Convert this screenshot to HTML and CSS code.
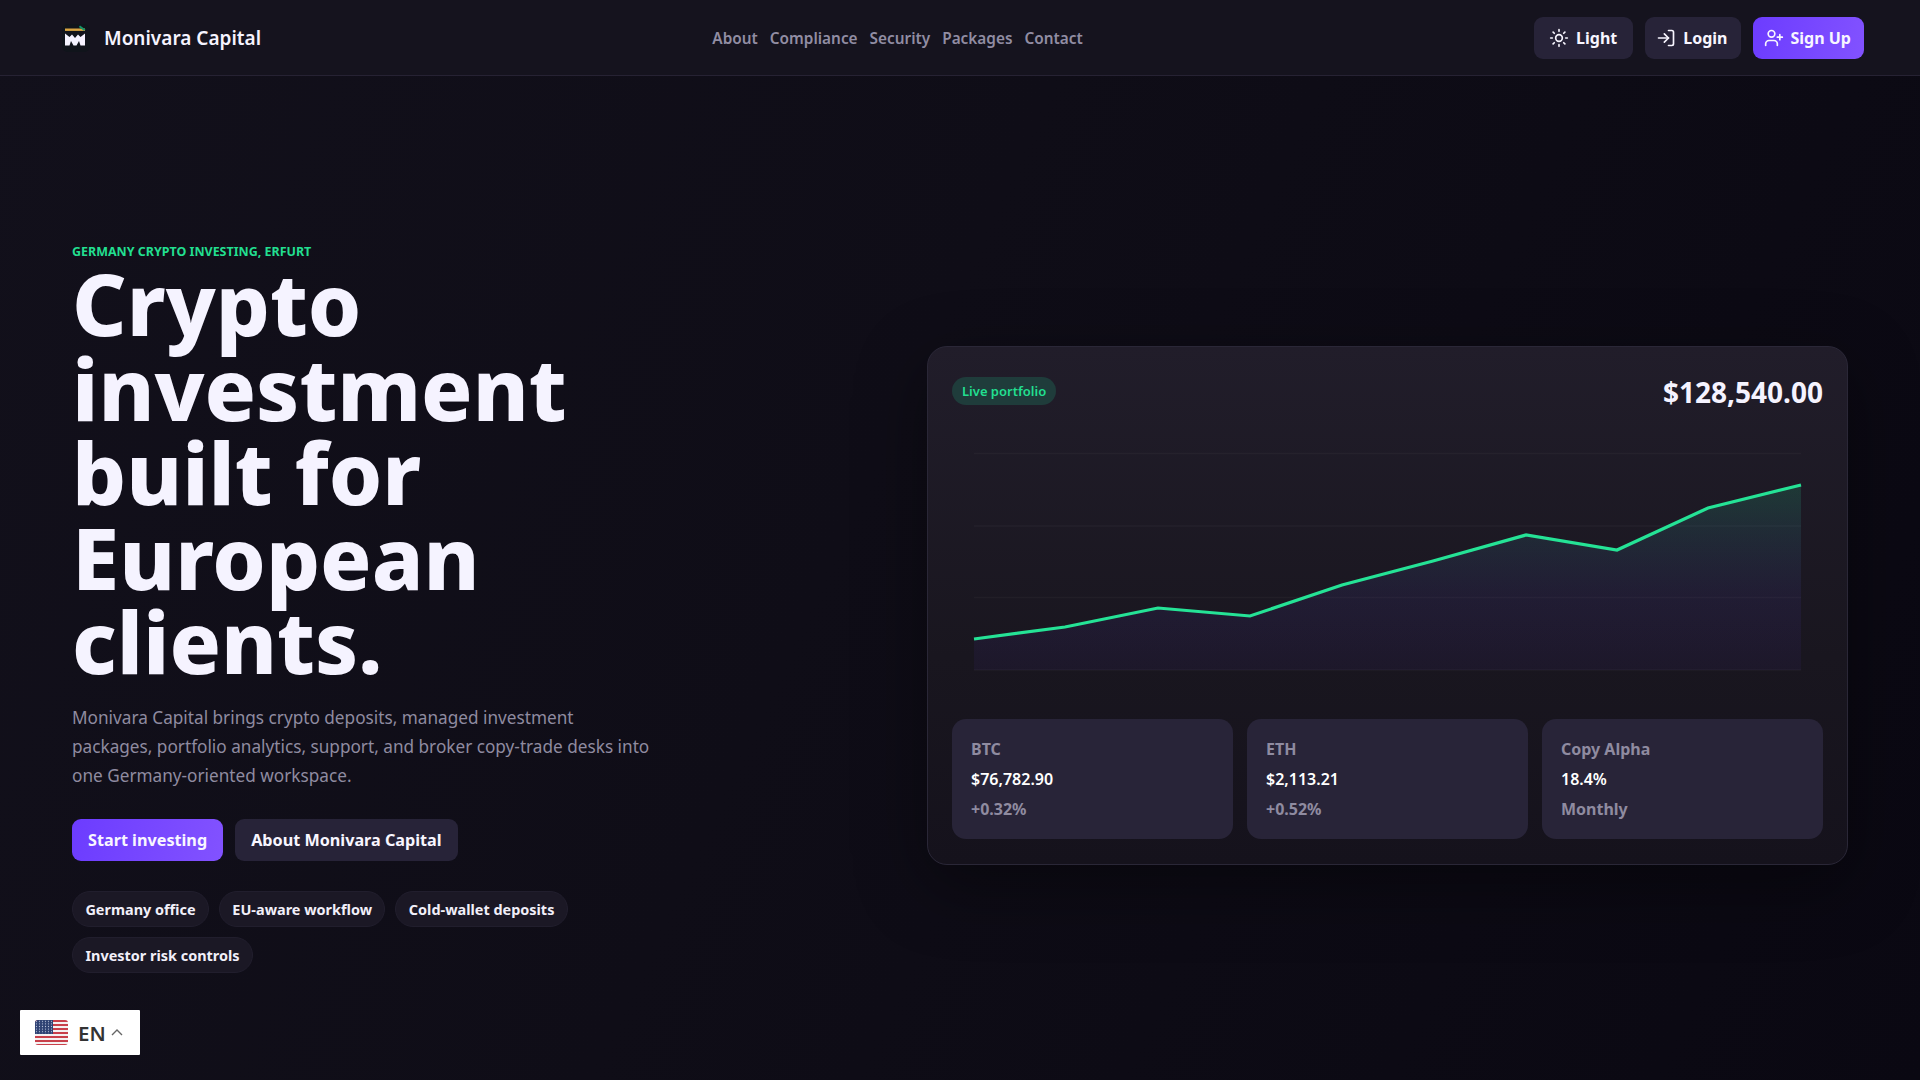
FILE: index.html
```html
<!DOCTYPE html>
<html lang="en">
<head>
<meta charset="utf-8">
<title>Monivara Capital</title>
<link rel="stylesheet" href="styles.css">
</head>
<body>
<header class="topbar">
  <a class="brand" href="#">
    <span class="brand-tile">
      <svg class="brand-mark" viewBox="0 0 28 28" aria-hidden="true">
        <rect x="3" y="4.5" width="20" height="2.4" fill="#d9a441"/>
        <path d="M18 1.5l5.5 4-1.6 1.2-5-3.8z" fill="#12966a"/>
        <path d="M3 9.5l4.5 3.5 2.5-2.5 3 3.5 3-3.5 2.500 2.500 4.500-3.500v12h-4.500l-1.500-4.500-2.500 4.500h-3l-2.500-4.500-1.500 4.500H3z" fill="#f5f3ff"/>
      </svg>
    </span>
    <span class="brand-name">Monivara Capital</span>
  </a>
  <nav class="nav">
    <a href="#">About</a><a href="#">Compliance</a><a href="#">Security</a><a href="#">Packages</a><a href="#">Contact</a>
  </nav>
  <div class="actions">
    <a class="btn btn-dark btn-theme" href="#">
      <svg class="icon" viewBox="0 0 24 24"><circle cx="12" cy="12" r="4"/><path d="M12 2v2M12 20v2M4.93 4.93l1.41 1.41M17.66 17.66l1.41 1.41M2 12h2M20 12h2M6.34 17.66l-1.41 1.41M19.07 4.93l-1.41 1.41"/></svg>
      Light
    </a>
    <a class="btn btn-dark" href="#">
      <svg class="icon" viewBox="0 0 24 24"><path d="M15 3h4a2 2 0 0 1 2 2v14a2 2 0 0 1-2 2h-4"/><path d="M10 17l5-5-5-5"/><path d="M15 12H3"/></svg>
      Login
    </a>
    <a class="btn btn-primary" href="#">
      <svg class="icon" viewBox="0 0 24 24"><path d="M16 21v-2a4 4 0 0 0-4-4H6a4 4 0 0 0-4 4v2"/><circle cx="9" cy="7" r="4"/><path d="M19 8v6M22 11h-6"/></svg>
      Sign Up
    </a>
  </div>
</header>

<main class="hero">
  <section class="hero-copy">
    <p class="eyebrow">Germany crypto investing, Erfurt</p>
    <h1>Crypto investment built for European clients.</h1>
    <p class="lead">Monivara Capital brings crypto deposits, managed investment packages, portfolio analytics, support, and broker copy-trade desks into one Germany-oriented workspace.</p>
    <div class="cta-row">
      <a class="btn btn-primary btn-cta" href="#">Start investing</a>
      <a class="btn btn-dark btn-cta" href="#">About Monivara Capital</a>
    </div>
    <ul class="chips">
      <li>Germany office</li>
      <li>EU-aware workflow</li>
      <li>Cold-wallet deposits</li>
      <li>Investor risk controls</li>
    </ul>
  </section>

  <section class="card">
    <div class="card-head">
      <span class="badge">Live portfolio</span>
      <strong class="total">$128,540.00</strong>
    </div>
    <svg class="chart" viewBox="0 0 871 266" aria-hidden="true">
      <defs>
        <linearGradient id="areaFill" x1="0" y1="0" x2="0" y2="1">
          <stop offset="0" stop-color="#22df90" stop-opacity=".16"/>
          <stop offset=".6" stop-color="#5a4bd6" stop-opacity=".1"/>
          <stop offset="1" stop-color="#6d3bff" stop-opacity=".05"/>
        </linearGradient>
      </defs>
      <path class="grid-line" d="M22 20.5H849M22 93H849M22 164.5H849M22 237H849"/>
      <path fill="url(#areaFill)" d="M22 206L113 194L206 175L298 183L390 152L481 128L574 102L665 117L756 75L849 52V237H22Z"/>
      <path class="trend" d="M22 206L113 194L206 175L298 183L390 152L481 128L574 102L665 117L756 75L849 52"/>
    </svg>
    <div class="stats">
      <div class="stat"><span class="stat-label">BTC</span><span class="stat-value">$76,782.90</span><span class="stat-note">+0.32%</span></div>
      <div class="stat"><span class="stat-label">ETH</span><span class="stat-value">$2,113.21</span><span class="stat-note">+0.52%</span></div>
      <div class="stat"><span class="stat-label">Copy Alpha</span><span class="stat-value">18.4%</span><span class="stat-note">Monthly</span></div>
    </div>
  </section>
</main>

<button class="lang" type="button">
  <svg class="flag" viewBox="0 0 33 25" aria-hidden="true">
    <defs>
      <clipPath id="flagClip"><rect width="33" height="25" rx="3"/></clipPath>
      <pattern id="stars" width="3" height="2.6" patternUnits="userSpaceOnUse"><rect width="3" height="2.6" fill="#2f4273"/><circle cx="1.5" cy="1.3" r=".6" fill="#b9c2da"/></pattern>
    </defs>
    <g clip-path="url(#flagClip)">
      <rect width="33" height="25" fill="#f4f1f1"/>
      <path fill="#c8404a" d="M0 0h33v2H0zM0 4h33v2H0zM0 8h33v2H0zM0 12h33v2H0zM0 16h33v2H0zM0 20h33v2H0zM0 24h33v1H0z"/>
      <rect width="18" height="14" fill="url(#stars)"/>
    </g>
  </svg>
  <span class="lang-code">EN</span>
  <svg class="chevron" viewBox="0 0 12 7" aria-hidden="true"><path d="M1 6l5-5 5 5"/></svg>
</button>
</body>
</html>
```
FILE: styles.css
```css
* { box-sizing: border-box; }
html, body { margin: 0; padding: 0; height: 100%; }
body {
  font-family: "Noto Sans", "Open Sans", sans-serif;
  color: #f5f3ff;
  background: linear-gradient(115deg, #12101b 0%, #0f0d17 45%, #0a0812 100%);
  min-height: 1080px;
  overflow: hidden;
}
a { color: inherit; text-decoration: none; }

.topbar {
  height: 76px;
  display: flex;
  justify-content: space-between;
  align-items: center;
  padding: 0 56px 0 62px;
  background: #15131e;
  border-bottom: 1px solid #262233;
}
.brand { display: flex; align-items: center; gap: 14px; }
.brand-tile {
  width: 28px; height: 28px;
  background: #10141b;
  border-radius: 6px;
  display: flex;
}
.brand-mark { width: 28px; height: 28px; }
.brand-name { font-size: 19px; font-weight: 600; color: #f5f3ff; }

.nav { display: flex; gap: 12px; padding-top: 1px; font-size: 15.36px; font-weight: 600; color: #918da3; }

.actions { display: flex; gap: 12px; }
.btn {
  height: 42px;
  display: inline-flex;
  align-items: center;
  gap: 7px;
  padding: 0 13px 0 11px;
  border-radius: 9px;
  font-size: 16px;
  font-weight: 700;
  color: #f8f6ff;
}
.btn-dark { background: #272338; }
.btn-theme { padding: 0 16px 0 15px; }
.btn-primary { background: linear-gradient(100deg, #6c3cff, #8252ff); }
.btn-cta { padding: 0 16px; font-size: 16.2px; }
.icon {
  width: 20px; height: 20px;
  fill: none;
  stroke: currentColor;
  stroke-width: 2;
  stroke-linecap: round;
  stroke-linejoin: round;
  flex: none;
}

.hero {
  height: 1004px;
  padding: 55px 72px 0;
  display: flex;
  justify-content: space-between;
  align-items: center;
}
.hero-copy { width: 620px; }
.eyebrow {
  margin: 0;
  padding-top: 4px;
  font-size: 12.48px;
  font-weight: 700;
  line-height: 19px;
  text-transform: uppercase;
  color: #22df90;
}
h1 {
  margin: 0 0 19.5px;
  font-size: 85px;
  line-height: 84.5px;
  font-weight: 800;
  color: #f5f3ff;
}
.lead {
  margin: 0 0 29px;
  max-width: 580px;
  font-size: 17.2px;
  line-height: 29px;
  color: #8f8ba0;
}
.cta-row { display: flex; gap: 12px; margin-bottom: 30px; }
.chips {
  list-style: none;
  margin: 0; padding: 0;
  display: flex;
  flex-wrap: wrap;
  gap: 10px;
}
.chips li {
  height: 36px;
  display: flex;
  align-items: center;
  padding: 0 12.4px;
  border: 1px solid #211e2d;
  border-radius: 18px;
  background: #1b1825;
  font-size: 14.45px;
  font-weight: 700;
  color: #f1eff9;
}

.card {
  width: 921px;
  padding: 24px 24px 25px;
  border: 1px solid #2a2737;
  border-radius: 20px;
  background: linear-gradient(180deg, #211d2a 0%, #19161f 60%, #15121c 100%);
  box-shadow: 0 20px 70px rgba(0, 0, 0, .4);
}
.card-head { display: flex; justify-content: space-between; align-items: flex-start; height: 42px; }
.badge {
  height: 28px;
  margin-top: 6px;
  display: flex;
  align-items: center;
  padding: 0 10px;
  border-radius: 14px;
  background: #1f3c3b;
  font-size: 13px;
  font-weight: 600;
  color: #22df90;
}
.total { font-size: 28px; font-weight: 700; line-height: 42px; color: #f5f3ff; }
.chart { display: block; width: 871px; height: 266px; margin: 20px 0; }
.grid-line { stroke: rgba(255, 255, 255, .03); stroke-width: 1.5; fill: none; }
.trend { fill: none; stroke: #25e396; stroke-width: 3.2; }
.stats { display: grid; grid-template-columns: repeat(3, 1fr); gap: 14px; }
.stat {
  height: 120px;
  padding: 15px 19px;
  border-radius: 14px;
  background: #282438;
  display: flex;
  flex-direction: column;
  font-size: 16px;
  font-weight: 700;
  line-height: 30px;
  color: #8f8ba0;
}
.stat-value { color: #fff; font-weight: 600; }

.lang {
  position: absolute;
  left: 20px; top: 1010px;
  width: 120px; height: 45px;
  display: flex;
  align-items: center;
  padding: 0 0 0 15px;
  border: 0;
  border-radius: 1px;
  background: #fff;
  font-family: inherit;
}
.flag { width: 33px; height: 25px; flex: none; }
.lang-code { margin-left: 10px; font-size: 20.5px; font-weight: 600; color: #333; }
.chevron { width: 12px; height: 7px; margin-left: 5px; fill: none; stroke: #666; stroke-width: 1.4; }
```
